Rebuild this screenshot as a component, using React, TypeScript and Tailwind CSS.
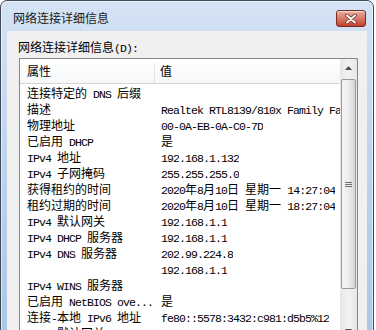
import React from "react";

const rows: [string, string][] = [
  ["连接特定的 DNS 后缀", ""],
  ["描述", "Realtek RTL8139/810x Family Fast Ethernet NIC"],
  ["物理地址", "00-0A-EB-0A-C0-7D"],
  ["已启用 DHCP", "是"],
  ["IPv4 地址", "192.168.1.132"],
  ["IPv4 子网掩码", "255.255.255.0"],
  ["获得租约的时间", "2020年8月10日 星期一 14:27:04"],
  ["租约过期的时间", "2020年8月10日 星期一 18:27:04"],
  ["IPv4 默认网关", "192.168.1.1"],
  ["IPv4 DHCP 服务器", "192.168.1.1"],
  ["IPv4 DNS 服务器", "202.99.224.8"],
  ["", "192.168.1.1"],
  ["IPv4 WINS 服务器", ""],
  ["已启用 NetBIOS ove...", "是"],
  ["连接-本地 IPv6 地址", "fe80::5578:3432:c981:d5b5%12"],
  ["IPv6 默认网关", ""],
];

// latin runs get a 6px-wide mono, CJK stays at 12px
function T({ s }: { s: string }) {
  const parts = s.match(/[\x20-\x7e]+|[^\x20-\x7e]+/g) || [];
  return (
    <>
      {parts.map((p, i) =>
        /^[\x20-\x7e]/.test(p) ? (
          <span key={i} className="font-['Liberation_Mono',monospace] text-[11.5px] tracking-[-0.9px]">
            {p}
          </span>
        ) : (
          <span key={i}>{p}</span>
        )
      )}
    </>
  );
}

function Arrow({ down }: { down?: boolean }) {
  return (
    <svg width="7" height="4" viewBox="0 0 7 4">
      {down ? <path d="M0 0 H7 L3.5 4 Z" fill="#4d4d4d" /> : <path d="M0 4 H7 L3.5 0 Z" fill="#4d4d4d" />}
    </svg>
  );
}

export default function App() {
  return (
    <div className="relative h-[330px] w-[376px] overflow-hidden bg-white font-['Noto_Sans_CJK_SC',sans-serif] text-[12px] text-black">
      <div className="flex h-[360px] w-[374px] flex-col rounded-t-[7px] border border-[#3f4a5a] bg-gradient-to-b from-[#d4e3f4] via-[#bcd2ec] to-[#a8c5e7] shadow-[inset_0_0_0_1px_rgba(255,255,255,0.55)]">
        {/* title bar */}
        <div className="flex h-[30px] shrink-0 items-start justify-between">
          <div className="mt-[9px] pl-[12px] leading-[16px] text-[#1a1a1a]">网络连接详细信息</div>
          <div className="mr-[7px] mt-[9px] flex h-[17px] w-[30px] items-center justify-center rounded-[3px] border border-[#7a2a1f] bg-gradient-to-b from-[#eab0a0] via-[#d77a64] to-[#c0412b] shadow-[inset_0_1px_0_rgba(255,255,255,0.6)]">
            <svg width="12" height="10" viewBox="0 0 12 10">
              <path d="M2 1.5 L10 8.5 M10 1.5 L2 8.5" stroke="#6b2a20" strokeWidth="3.6" strokeLinecap="round" />
              <path d="M2 1.5 L10 8.5 M10 1.5 L2 8.5" stroke="#ffffff" strokeWidth="2" strokeLinecap="round" />
            </svg>
          </div>
        </div>

        {/* client area */}
        <div className="mx-[6px] flex-1 bg-[#f0f0f0] pt-[8px]">
          <div className="pl-[11px] leading-[16px]">
            <T s="网络连接详细信息(D):" />
          </div>

          <div className="ml-[12px] mt-px flex h-[282px] w-[339px] border border-[#828790] bg-white">
            <div className="flex min-w-0 flex-1 flex-col overflow-hidden">
              <div className="flex h-[25px] shrink-0 border-b border-[#d5d5d5] bg-gradient-to-b from-white to-[#f6f7f9] pt-[4px] leading-[16px]">
                <div className="w-[135px] shrink-0 border-r border-[#e3e5e8] pl-[7px]">属性</div>
                <div className="pl-[5px]">值</div>
              </div>
              <div className="pt-px">
                {rows.map(([k, v], i) => (
                  <div key={i} className="flex h-[16px] whitespace-pre leading-[16px]">
                    <div className="w-[141px] shrink-0 overflow-hidden pl-[7px]">
                      <T s={k} />
                    </div>
                    <div className="overflow-hidden">
                      <T s={v} />
                    </div>
                  </div>
                ))}
              </div>
            </div>

            {/* scrollbar */}
            <div className="flex w-[17px] shrink-0 flex-col bg-gradient-to-r from-[#e6e6e6] via-[#f2f2f2] to-[#e6e6e6]">
              <div className="flex h-[17px] shrink-0 items-center justify-center">
                <Arrow />
              </div>
              <div className="flex-1 px-px pt-[3px]">
                <div className="flex h-[210px] items-center justify-center rounded-[2px] border border-[#9a9a9a] bg-gradient-to-r from-[#f6f6f6] via-[#ececec] to-[#d6d6d6]">
                  <svg width="7" height="7" viewBox="0 0 7 7">
                    <path d="M0 1.5 H7 M0 3.5 H7 M0 5.5 H7" stroke="#707070" strokeWidth="1" />
                  </svg>
                </div>
              </div>
              <div className="flex h-[17px] shrink-0 items-center justify-center">
                <Arrow down />
              </div>
            </div>
          </div>
        </div>
      </div>
    </div>
  );
}
